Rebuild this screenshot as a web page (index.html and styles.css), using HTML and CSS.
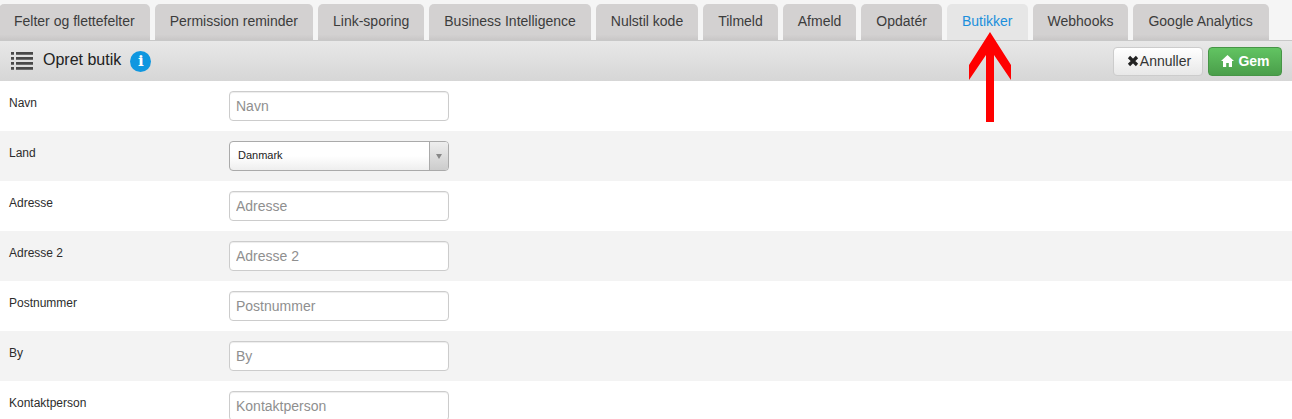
FILE: index.html
```html
<!DOCTYPE html>
<html lang="da">
<head>
    <meta charset="UTF-8">
    <title>Opret butik</title>
    <link rel="stylesheet" href="styles.css">
</head>
<body>
    <ul class="tabs">
        <li class="tab">Felter og flettefelter</li>
        <li class="tab">Permission reminder</li>
        <li class="tab">Link-sporing</li>
        <li class="tab">Business Intelligence</li>
        <li class="tab">Nulstil kode</li>
        <li class="tab">Tilmeld</li>
        <li class="tab">Afmeld</li>
        <li class="tab">Opdatér</li>
        <li class="tab active">Butikker</li>
        <li class="tab">Webhooks</li>
        <li class="tab">Google Analytics</li>
    </ul>

    <div class="toolbar">
        <svg class="list-icon" width="22" height="20" viewBox="0 0 22 20">
            <path fill="#484848" d="M0 1h3v2.700H0zM5 1h17v2.700H5zM0 6h3v2.700H0zM5 6h17v2.700H5zM0 11h3v2.700H0zM5 11h17v2.700H5zM0 16h3v2.700H0zM5 16h17v2.700H5z"/>
        </svg>
        <h1 class="title">Opret butik</h1>
        <span class="info">i</span>
        <div class="actions">
            <button class="btn">
                <svg width="12" height="12" viewBox="0 0 12 12"><path fill="none" stroke="#222" stroke-width="3.200" d="M2 2l8 8M10 2l-8 8"/></svg>Annuller
            </button>
            <button class="btn btn-green">
                <svg width="13" height="12" viewBox="0 0 13 12"><path fill="#fff" d="M6.500 0L13 6h-2v6H7.800V8H5.200v4H2V6H0z"/></svg>Gem
            </button>
        </div>
    </div>

    <form class="form">
        <div class="row"><label>Navn</label><input type="text" placeholder="Navn"></div>
        <div class="row"><label>Land</label>
            <div class="select">
                <span class="select-value">Danmark</span>
                <span class="select-arrow"></span>
            </div>
        </div>
        <div class="row"><label>Adresse</label><input type="text" placeholder="Adresse"></div>
        <div class="row"><label>Adresse 2</label><input type="text" placeholder="Adresse 2"></div>
        <div class="row"><label>Postnummer</label><input type="text" placeholder="Postnummer"></div>
        <div class="row"><label>By</label><input type="text" placeholder="By"></div>
        <div class="row"><label>Kontaktperson</label><input type="text" placeholder="Kontaktperson"></div>
    </form>

    <svg class="red-arrow" width="42" height="90" viewBox="0 0 42 90">
        <path fill="#ff0000" d="M21 0L42 33V48L25 23V90H17V23L0 48V33z"/>
    </svg>
</body>
</html>
```

FILE: styles.css
```css
* {
    margin: 0;
    padding: 0;
    box-sizing: border-box;
}

html, body {
    height: 419px;
    overflow: hidden;
}

body {
    font-family: 'Liberation Sans', Arial, sans-serif;
    background: #fff;
    color: #333;
    position: relative;
}

.tabs {
    display: flex;
    gap: 5px;
    height: 40px;
    padding-top: 4px;
    list-style: none;
    background: #f5f5f5;
}

.tab {
    height: 36px;
    padding: 9px 15px 0;
    font-size: 14px;
    line-height: 17px;
    color: #3c3c3c;
    background: linear-gradient(#d3d1d1 85%, #c9c7c7);
    border-radius: 5px 5px 0 0;
}

.tab:first-child {
    margin-left: -1px;
}

.tab:last-child {
    padding-right: 16px;
}

.active {
    color: #1b8fdc;
    background: #e6e6e6;
}

.toolbar {
    display: flex;
    align-items: center;
    height: 41px;
    padding: 0 10px 0 11px;
    background: linear-gradient(#e8e8e8, #d6d6d6);
    border-top: 1px solid #c8c8c8;
}

.list-icon {
    margin-right: 10px;
}

.title {
    font-size: 16px;
    font-weight: normal;
    color: #222;
    margin-top: -3px;
}

.info {
    width: 21px;
    height: 21px;
    margin-left: 9px;
    border-radius: 50%;
    background: #0f97e0;
    color: #fff;
    font-family: 'DejaVu Serif', serif;
    font-weight: bold;
    font-size: 15px;
    line-height: 21px;
    text-align: center;
}

.actions {
    display: flex;
    gap: 5px;
    margin-left: auto;
}

.btn {
    display: flex;
    align-items: center;
    justify-content: center;
    gap: 1px;
    width: 90px;
    height: 29px;
    padding-left: 2px;
    font-family: inherit;
    font-size: 14px;
    color: #333;
    background: linear-gradient(#fff, #e8e8e8);
    border: 1px solid #ccc;
    border-radius: 4px;
}

.btn-green {
    width: 74px;
    gap: 4px;
    padding-left: 1px;
    color: #fff;
    font-weight: bold;
    background: linear-gradient(#62c462, #4a9e4a);
    border-color: #469546;
}

.row {
    display: flex;
    height: 50px;
    padding: 10px 0 0 9px;
    background: #fff;
}

.row:nth-child(even) {
    background: #f3f3f3;
}

.row label {
    width: 220px;
    font-size: 12px;
    line-height: 15px;
    padding-top: 5px;
    color: #2c2c2c;
}

.row input {
    width: 220px;
    height: 30px;
    padding: 0 6px;
    font-family: inherit;
    font-size: 14px;
    color: #333;
    background: #fff;
    border: 1px solid #ccc;
    border-radius: 4px;
    box-shadow: inset 0 1px 1px rgba(0, 0, 0, 0.075);
}

.row input::placeholder {
    color: #8f8f8f;
}

.select {
    display: flex;
    width: 220px;
    height: 30px;
    font-size: 11px;
    color: #222;
    background: linear-gradient(#fff 50%, #eee);
    border: 1px solid #aaa;
    border-radius: 4px;
}

.select-value {
    flex: 1;
    padding-left: 8px;
    line-height: 27px;
}

.select-arrow {
    position: relative;
    width: 19px;
    background: linear-gradient(#eee, #ccc);
    border-left: 1px solid #aaa;
    border-radius: 0 3px 3px 0;
}

.select-arrow::after {
    content: '';
    position: absolute;
    top: 12px;
    left: 6px;
    border: 3.500px solid transparent;
    border-top: 5px solid #888;
}

.red-arrow {
    position: absolute;
    top: 32px;
    left: 969px;
}
```
